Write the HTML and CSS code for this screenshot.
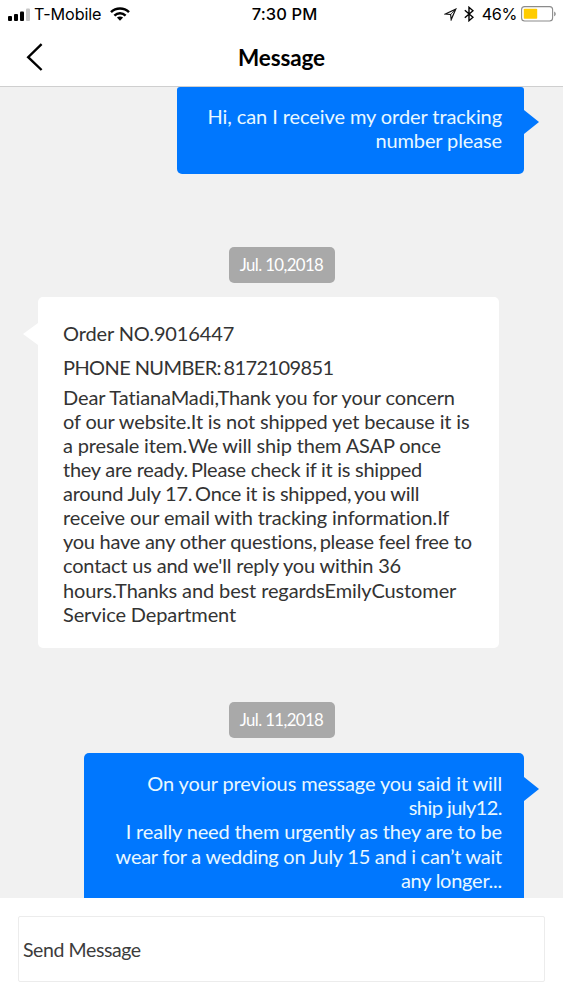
FILE: index.html
```html
<!DOCTYPE html>
<html lang="en">
<head>
<meta charset="utf-8">
<title>Message</title>
<link rel="stylesheet" href="styles.css">
</head>
<body>
<div class="screen">
  <header class="header">
    <div class="status">
      <div class="status-left">
        <svg class="signal" width="22" height="14" viewBox="0 0 22 14"><rect x="0" y="8" width="4" height="5" rx="1"/><rect x="6" y="6" width="4" height="7" rx="1"/><rect x="12" y="3.5" width="4" height="9.5" rx="1"/><rect x="18" y="0.5" width="4" height="12.5" rx="1" fill="#c6c6c6"/></svg>
        <span class="carrier">T-Mobile</span>
        <svg class="wifi" width="20" height="14" viewBox="0 0 20 14" fill="none" stroke="#000" stroke-width="2.5"><path d="M1 5.2C6 .3 14 .3 19 5.2"/><path d="M4.4 8.6c3.2-3 8-3 11.2 0"/><path d="M10 13.8 6.9 10.6c1.8-1.6 4.4-1.6 6.2 0z" fill="#000" stroke="none"/></svg>
      </div>
      <span class="clock">7:30 PM</span>
      <div class="status-right">
        <svg width="13" height="13" viewBox="0 0 13 13" fill="none" stroke="#111" stroke-width="1.2" stroke-linejoin="miter"><path d="M11.8 1.1 7.2 11.6 6.6 6.5 1.2 6z"/><path d="M6.6 6.5 11.8 1.1" stroke-width=".8"/></svg>
        <svg class="bluetooth" width="10" height="16" viewBox="0 0 10 16" fill="none" stroke="#000" stroke-width="1.4"><path d="M.8 4.3 9 11.3 5 14.7V1.3l4 3.4L.8 11.7"/></svg>
        <span class="percent">46%</span>
        <svg class="battery" width="36" height="16" viewBox="0 0 36 16"><rect x=".6" y=".6" width="31" height="14.4" rx="3" fill="#fff" stroke="#8b8b8b" stroke-width="1.1"/><rect x="2.8" y="2.8" width="13.4" height="10" rx=".8" fill="#fc0"/><path d="M33.2 5.4c2 .8 2 4 0 4.8z" fill="#8b8b8b"/></svg>
      </div>
    </div>
    <div class="nav">
      <svg class="back" width="18" height="28" viewBox="0 0 18 28" fill="none" stroke="#000" stroke-width="2.4"><path d="M15.6 1.2 2.2 14.2l13.4 12.8"/></svg>
      <h1 class="title">Message</h1>
    </div>
  </header>

  <main class="chat">
    <section class="bubble sent first">
      <p class="line ls-08">Hi, can I receive my order tracking</p>
      <p class="line">number please</p>
    </section>

    <time class="date">Jul. 10,2018</time>

    <section class="bubble received">
      <p class="line order">Order NO.9016447</p>
      <p class="line phone">PHONE NUMBER:<span class="tight"> </span>8172109851</p>
      <p class="line">Dear TatianaMadi,Thank you for your concern</p>
      <p class="line ls-15">of our website.It is not shipped yet because it is</p>
      <p class="line ls-15">a presale item.<span class="tighter"> </span>We will ship them ASAP once</p>
      <p class="line ls-25">they are ready.<span class="tight"> </span>Please check if it is shipped</p>
      <p class="line ls-25">around July 17.<span class="tight"> </span>Once it is shipped,<span class="tight"> </span>you will</p>
      <p class="line">receive our email with tracking information.If</p>
      <p class="line ls-25">you have any other questions,<span class="tight"> </span>please feel free to</p>
      <p class="line ls-18">contact us and we'll reply you within 36</p>
      <p class="line">hours.Thanks and best regardsEmilyCustomer</p>
      <p class="line">Service Department</p>
    </section>

    <time class="date">Jul. 11,2018</time>

    <section class="bubble sent second">
      <p class="line">On your previous message you said it will</p>
      <p class="line ls-50">ship july12.</p>
      <p class="line ls-15">I really need them urgently as they are to be</p>
      <p class="line ls-25">wear for a wedding on July 15 and i can’t wait</p>
      <p class="line ls-25">any longer...</p>
    </section>
  </main>

  <footer class="composer">
    <div class="input">Send Message</div>
  </footer>
</div>
</body>
</html>
```
FILE: styles.css
```css
* { box-sizing: border-box; }
body { margin: 0; font-family: Lato, sans-serif; color: #333; }
p, h1 { margin: 0; }
svg { display: block; flex: none; }

.screen { display: flex; flex-direction: column; height: 1000px; overflow: hidden; background: #f1f1f1; }

.header { flex: none; height: 87px; background: #fff; border-bottom: 1px solid #cfcfcf; color: #000; }
.status { display: grid; grid-template-columns: 1fr auto 1fr; align-items: center; height: 28px; padding: 0 6px 0 8px; font: 16.2px/20px Inter, sans-serif; }
.status-left, .status-right { display: flex; align-items: center; }
.status-right { justify-content: flex-end; }
.signal { margin: 1px 4px 0 0; }
.carrier { letter-spacing: -.1px; }
.wifi { margin-left: 9px; margin-top: -1px; }
.clock { margin-left: 4px; font-weight: 500; font-size: 16.5px; letter-spacing: .1px; }
.bluetooth { margin-left: 7px; }
.percent { margin-left: 8px; letter-spacing: -.4px; }
.battery { margin-left: 4px; }

.nav { display: grid; grid-template-columns: 45px 1fr 45px; align-items: center; height: 58px; }
.back { margin-left: 26px; margin-top: -1px; }
.title { padding-top: 2px; font-size: 22.5px; line-height: 28px; font-weight: 700; text-align: center; letter-spacing: -.15px; }

.chat { flex: 1; min-height: 0; overflow: hidden; display: flex; flex-direction: column; }
.bubble { position: relative; flex: none; border-radius: 5px; font-size: 20px; line-height: 24.1px; }
.line { white-space: pre; letter-spacing: -.12px; }
.ls-08 { letter-spacing: -.08px; }
.ls-15 { letter-spacing: -.16px; }
.ls-18 { letter-spacing: -.18px; }
.ls-25 { letter-spacing: -.26px; }
.ls-50 { letter-spacing: -.55px; }
.tight { word-spacing: -2px; }
.tighter { word-spacing: -4px; }

.sent { align-self: flex-end; margin-right: 39px; padding: 17px 22px 0 0; background: #0077fe; color: #e9f8ff; text-align: right; }
.sent::after { content: ""; position: absolute; left: 100%; top: 24px; border: 12px solid transparent; border-left: 15px solid #0077fe; border-right: 0; }
.first { width: 347px; height: 87px; border-top-left-radius: 3px; border-top-right-radius: 3px; }
.first::after { top: 23px; }
.second { width: 440.5px; height: 180px; margin-top: 15px; padding-top: 18.3px; }

.received { width: 461px; height: 351px; margin: 14.5px 0 54px 37.5px; padding: 23.6px 0 0 25.5px; background: #fff; }
.received::before { content: ""; position: absolute; right: 100%; top: 26px; border: 11px solid transparent; border-right: 15px solid #fff; border-left: 0; }
.order { margin-bottom: 10px; }
.phone { margin-bottom: 6px; letter-spacing: -.6px; }

.date { flex: none; align-self: center; width: 106px; height: 36px; border-radius: 5px; background: #a9a9a9; color: #fff; font-size: 16.8px; line-height: 36px; letter-spacing: -.6px; text-align: center; }
.first + .date { margin-top: 72.5px; }

.composer { flex: none; height: 102px; padding: 18px; background: #fff; }
.input { width: 527px; height: 66px; border: 1px solid #ececec; border-radius: 2px; padding-left: 4px; font-size: 19.5px; line-height: 66px; letter-spacing: -.4px; color: #3c3c3c; }
```
